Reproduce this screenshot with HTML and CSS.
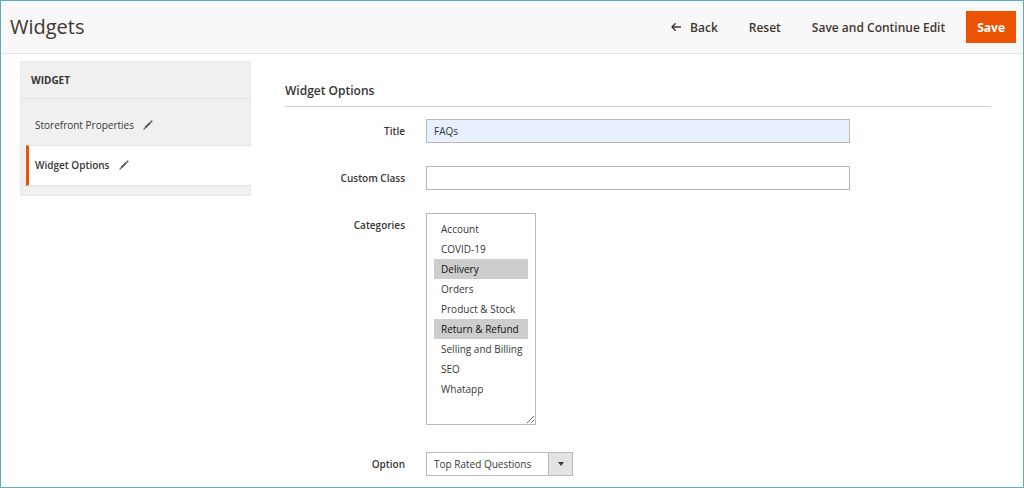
FILE: index.html
```html
<!DOCTYPE html>
<html lang="en">
<head>
<meta charset="utf-8">
<meta name="viewport" content="width=device-width, initial-scale=1">
<title>Widgets</title>
<link rel="stylesheet" href="styles.css">
</head>
<body>
<div class="page">
  <header class="page-header">
    <h1 class="page-title">Widgets</h1>
    <div class="page-actions">
      <button type="button" class="action action-back">
        <svg class="icon-back" viewBox="0 0 10 10" aria-hidden="true"><path d="M9.4 5H1M4.2 1.8L1 5l3.2 3.2"/></svg>
        Back
      </button>
      <button type="button" class="action">Reset</button>
      <button type="button" class="action">Save and Continue Edit</button>
      <button type="submit" form="widget-form" class="action action-primary">Save</button>
    </div>
  </header>

  <div class="page-body">
    <nav class="side-tabs" aria-label="Widget">
      <h2 class="side-title">WIDGET</h2>
      <ul class="side-list">
        <li>
          <a class="side-link" href="#storefront">Storefront Properties
            <svg class="icon-pencil" viewBox="0 0 10 10" aria-hidden="true"><path d="M.3 9.7l.8-2.2 1.4 1.4zM1.5 7.1l5.4-5.3 1.3 1.3-5.4 5.4zM7.3 1.4l.8-.8q.4-.4.8 0l.5.5q.4.4 0 .8l-.8.8z"/></svg>
          </a>
        </li>
        <li>
          <a class="side-link side-link-active" href="#widget-options" aria-current="page">Widget Options
            <svg class="icon-pencil" viewBox="0 0 10 10" aria-hidden="true"><path d="M.3 9.7l.8-2.2 1.4 1.4zM1.5 7.1l5.4-5.3 1.3 1.3-5.4 5.4zM7.3 1.4l.8-.8q.4-.4.8 0l.5.5q.4.4 0 .8l-.8.8z"/></svg>
          </a>
        </li>
      </ul>
    </nav>

    <main class="content" id="widget-options">
      <h2 class="section-title">Widget Options</h2>
      <form class="form" id="widget-form">
        <div class="field">
          <label class="field-label" for="title">Title</label>
          <input class="text-input text-input-filled" id="title" type="text" value="FAQs">
        </div>
        <div class="field">
          <label class="field-label" for="custom-class">Custom Class</label>
          <input class="text-input" id="custom-class" type="text">
        </div>
        <div class="field field-tall">
          <label class="field-label" for="categories">Categories</label>
          <select class="multi-select" id="categories" multiple size="10">
            <option>Account</option>
            <option>COVID-19</option>
            <option selected>Delivery</option>
            <option>Orders</option>
            <option>Product &amp; Stock</option>
            <option selected>Return &amp; Refund</option>
            <option>Selling and Billing</option>
            <option>SEO</option>
            <option>Whatapp</option>
          </select>
        </div>
        <div class="field">
          <label class="field-label" for="option">Option</label>
          <div class="select-wrap">
            <select class="select" id="option">
              <option>Top Rated Questions</option>
            </select>
            <span class="select-arrow"></span>
          </div>
        </div>
      </form>
    </main>
  </div>
</div>
</body>
</html>
```
FILE: styles.css
```css
* {
  box-sizing: border-box;
}

body {
  margin: 0;
  background: #fff;
  color: #363636;
  font-family: "Open Sans", "Noto Sans", sans-serif;
  font-size: 10px;
  line-height: 14px;
}

button,
input,
select {
  font-family: inherit;
  font-size: inherit;
  color: inherit;
}

.page {
  min-height: 100vh;
  border: 1px solid #5eacbf;
}

.page-header {
  display: flex;
  align-items: center;
  justify-content: space-between;
  padding: 10px 7px 10px 9px;
  background: #f8f8f8;
  border-bottom: 1px solid #e3e3e3;
}

.page-title {
  margin: 0;
  color: #41362f;
  font-size: 20px;
  font-weight: 400;
  line-height: 28px;
}

.page-actions {
  display: flex;
  align-items: center;
  gap: 11px;
}

.action {
  display: flex;
  align-items: center;
  gap: 9px;
  height: 32px;
  padding: 0 10px;
  border: 0;
  background: transparent;
  color: #41362f;
  font-size: 12px;
  font-weight: 600;
}

.action-primary {
  padding: 0 11px;
  background: #eb5202;
  color: #fff;
  font-weight: 700;
}

.icon-back {
  width: 10px;
  height: 10px;
  fill: none;
  stroke: #41362f;
  stroke-width: 1.4;
  stroke-linecap: round;
  stroke-linejoin: round;
}

.page-body {
  display: grid;
  grid-template-columns: 231px 1fr;
  gap: 34px;
  align-items: start;
  padding: 7px 32px 8px 19px;
}

.side-tabs {
  padding-bottom: 9px;
  background: #f0f0f0;
  border: 1px solid #e8e8e8;
}

.side-title {
  margin: 0;
  padding: 11px 10px;
  border-bottom: 1px solid #e3e3e3;
  font-size: 10px;
  font-weight: 700;
  line-height: 14px;
}

.side-list {
  margin: 0;
  padding: 7px 0 0 5px;
  list-style: none;
}

.side-link {
  display: flex;
  align-items: center;
  gap: 9px;
  height: 39px;
  padding: 0 0 1px 9px;
  color: inherit;
  text-decoration: none;
}

.side-link-active {
  height: 41px;
  margin-right: -1px;
  padding-left: 6px;
  border: solid #e3e3e3;
  border-width: 1px 0;
  border-left: 3px solid #eb5202;
  background: #fff;
  font-weight: 600;
}

.icon-pencil {
  width: 10px;
  height: 10px;
  fill: #5a534e;
}

.content {
  padding-top: 21px;
}

.section-title {
  margin: 0 0 12px;
  padding-bottom: 6px;
  border-bottom: 1px solid #ccc;
  font-size: 12px;
  font-weight: 600;
  line-height: 18px;
}

.form {
  display: grid;
  gap: 23px;
}

.field {
  display: grid;
  grid-template-columns: 17% 60%;
  column-gap: 21px;
  align-items: start;
}

.field-tall {
  margin-bottom: 4px;
}

.field-label {
  padding: 5px 0;
  font-weight: 600;
  text-align: right;
}

.text-input {
  width: 100%;
  height: 24px;
  padding: 0 7px;
  border: 1px solid #b8b8b8;
  border-radius: 0;
  background: #fff;
}

.text-input-filled {
  background: #e8f0fe;
}

.multi-select {
  justify-self: start;
  width: 110px;
  height: 212px;
  padding: 5px 7px;
  border: 1px solid #b8b8b8;
  border-radius: 0;
  background: #fff;
  overflow: auto;
  resize: both;
}

.multi-select option {
  min-height: 20px;
  padding: 3px 7px;
  line-height: 14px;
}

.multi-select option:checked {
  background: #cdcdcd linear-gradient(#cdcdcd, #cdcdcd);
}

.select-wrap {
  position: relative;
  justify-self: start;
}

.select {
  display: block;
  width: 147px;
  height: 24px;
  padding: 0 28px 0 7px;
  border: 1px solid #b8b8b8;
  border-radius: 0;
  background: #fff;
  appearance: none;
}

.select-arrow {
  position: absolute;
  top: 0;
  right: 0;
  display: grid;
  place-items: center;
  width: 25px;
  height: 24px;
  border: 1px solid #b8b8b8;
  background: #e3e3e3;
  pointer-events: none;
}

.select-arrow::before {
  content: "";
  border: solid transparent;
  border-width: 4px 3px 0;
  border-top-color: #41362f;
}
```
